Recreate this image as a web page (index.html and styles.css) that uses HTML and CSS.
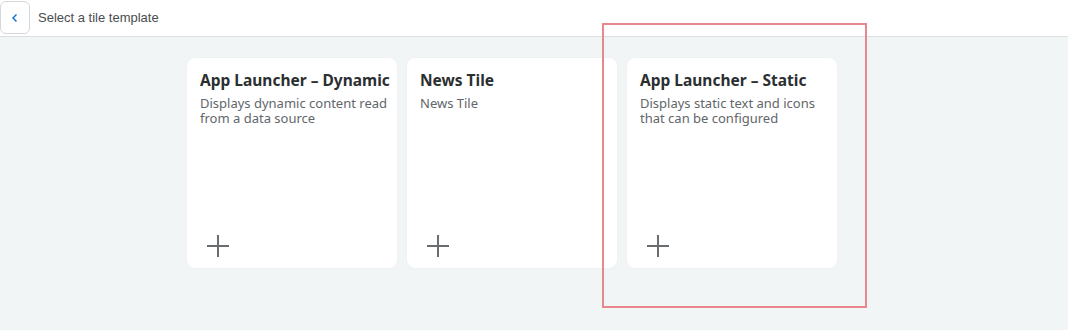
FILE: index.html
```html
<!DOCTYPE html>
<html lang="en">
<head>
<meta charset="UTF-8" />
<meta name="viewport" content="width=device-width, initial-scale=1" />
<title>Select a tile template</title>
<link rel="stylesheet" href="styles.css">
</head>
<body>

<div class="header">
  <button class="back-btn" aria-label="Back">
    <svg width="10" height="10" viewBox="0 0 10 10"><path d="M6.5 1.5 L3 5 L6.5 8.5" fill="none" stroke="#0a6ed1" stroke-width="1.4"/></svg>
  </button>
  <span class="header-title">Select a tile template</span>
</div>

<div class="content">
  <div class="tile">
    <div class="tile-title">App Launcher – Dynamic</div>
    <div class="tile-desc">Displays dynamic content read from a data source</div>
    <div class="tile-add"><svg width="22" height="22" viewBox="0 0 22 22"><path d="M11 0 V22 M0 11 H22" stroke="#6a6d70" stroke-width="2"/></svg></div>
  </div>
  <div class="tile">
    <div class="tile-title">News Tile</div>
    <div class="tile-desc">News Tile</div>
    <div class="tile-add"><svg width="22" height="22" viewBox="0 0 22 22"><path d="M11 0 V22 M0 11 H22" stroke="#6a6d70" stroke-width="2"/></svg></div>
  </div>
  <div class="tile">
    <div class="tile-title">App Launcher – Static</div>
    <div class="tile-desc">Displays static text and icons that can be configured</div>
    <div class="tile-add"><svg width="22" height="22" viewBox="0 0 22 22"><path d="M11 0 V22 M0 11 H22" stroke="#6a6d70" stroke-width="2"/></svg></div>
  </div>
</div>

<div class="highlight"></div>

</body>
</html>
```

FILE: styles.css
```css
body { margin: 0; background: #f2f5f6; font-family: "Noto Sans", Arial, sans-serif; height: 330px; overflow: hidden; position: relative; }
.header {
  height: 36px;
  background: #fff;
  border-bottom: 1px solid #dcdfe0;
  display: flex;
  align-items: center;
}
.back-btn {
  width: 30px;
  height: 33px;
  margin-top: -1px;
  border: 1px solid #d5d8da;
  border-radius: 6px;
  background: #fff;
  display: flex;
  align-items: center;
  justify-content: center;
  padding: 0;
}
.header-title {
  margin-left: 8px;
  margin-top: -2px;
  font-family: "Liberation Sans", Arial, sans-serif;
  font-size: 13px;
  color: #4a4d50;
}
.content {
  display: flex;
  gap: 10px;
  padding: 21px 0 0 187px;
}
.tile {
  width: 210px;
  height: 210px;
  box-sizing: border-box;
  background: #fff;
  border-radius: 8px;
  padding: 12px 8px 0 13px;
  position: relative;
  box-shadow: 0 0 2px rgba(0, 0, 0, 0.06);
}
.tile-title {
  font-size: 15.5px;
  font-weight: 700;
  color: #2c2f31;
  line-height: 20px;
  white-space: nowrap;
}
.tile-desc {
  margin-top: 6px;
  font-size: 13px;
  line-height: 15px;
  color: #62666a;
}
.tile-add {
  position: absolute;
  left: 20px;
  bottom: 11px;
  line-height: 0;
}
.highlight {
  position: absolute;
  left: 602px;
  top: 23px;
  width: 261px;
  height: 281px;
  border: 2px solid #e8878e;
}
```
